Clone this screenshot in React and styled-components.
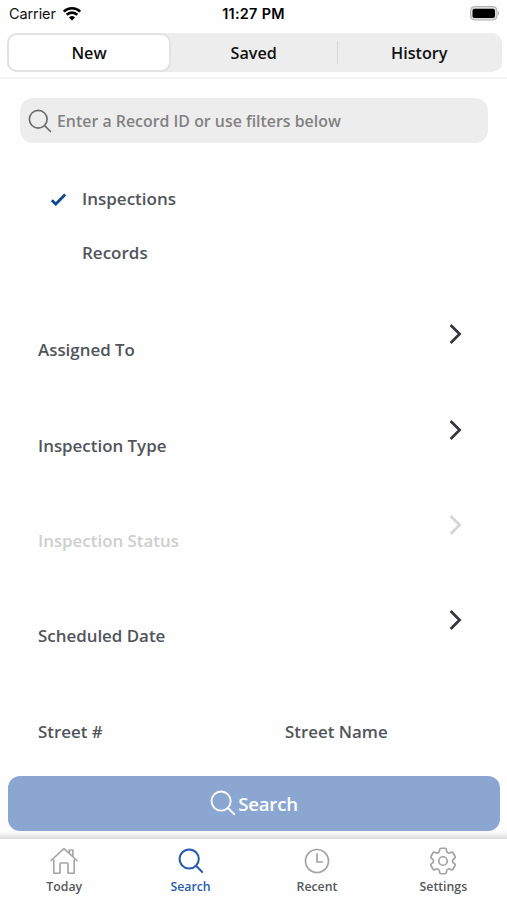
import styled, { createGlobalStyle, css } from 'styled-components';
import { useState } from 'react';
import { HiOutlineCog6Tooth } from 'react-icons/hi2';

const GlobalStyle = createGlobalStyle`
  * {
    box-sizing: border-box;
  }
  body {
    margin: 0;
    background: #fefefe;
    font-family: 'Open Sans', sans-serif;
  }
  button {
    font: inherit;
    color: inherit;
    border: 0;
    padding: 0;
    background: none;
  }
`

const Screen = styled.div`
  width: 507px;
  height: 900px;
  display: flex;
  flex-direction: column;
  overflow: hidden;
  background: #fefefe;
`

const StatusBar = styled.header`
  display: grid;
  grid-template-columns: 1fr auto 1fr;
  align-items: center;
  height: 28px;
  padding: 0 7px 2px 9px;
  font-family: Inter, sans-serif;
  font-size: 14.5px;
  color: #111;
  > svg {
    justify-self: end;
  }
`
const Carrier = styled.span`
  display: flex;
  align-items: center;
  gap: 6px;
  letter-spacing: -0.1px;
`
const Clock = styled.span`
  font-weight: 600;
  font-size: 14.4px;
  letter-spacing: 0.3px;
  margin-right: 2px;
  color: #000;
`

const Header = styled.div`
  height: 51px;
  padding: 5px 5px 0 7px;
  border-bottom: 2px solid #f5f5f5;
`
const Segments = styled.div`
  display: grid;
  grid-template-columns: 164px 1fr 1fr;
  height: 39px;
  border-radius: 10px;
  background: #ededed;
`
const Segment = styled.button`
  display: flex;
  align-items: center;
  justify-content: center;
  font-size: 16.2px;
  font-weight: 600;
  color: #111;
  ${props => props.$divided && css`
    background: linear-gradient(#d8d8d8, #d8d8d8) left center / 1px 23px no-repeat;
  `}
  ${props => props.$active && css`
    border: solid 2px #e2e2e2;
    border-radius: 10px;
    background: #fff;
  `}
`

const Content = styled.main`
  flex: 1;
  display: flex;
  flex-direction: column;
  padding-top: 19px;
`
const SearchField = styled.label`
  display: flex;
  align-items: center;
  gap: 5px;
  height: 45px;
  margin: 0 19px 0 20px;
  padding-left: 8px;
  border-radius: 13px;
  background: #ededed;
  color: #6c6c6c;
`
const SearchInput = styled.input`
  flex: 1;
  border: 0;
  padding: 0;
  outline: 0;
  background: none;
  font: 600 15.9px 'Open Sans', sans-serif;
  &::placeholder {
    color: #828282;
    opacity: 1;
  }
`

const RecordTypes = styled.div`
  display: flex;
  flex-direction: column;
  padding: 29px 12px 1px 50px;
`
const RecordType = styled.button`
  display: grid;
  grid-template-columns: 32px 1fr;
  align-items: center;
  height: 53.5px;
  font-size: 17px;
  font-weight: 600;
  text-align: left;
  color: #51555b;
`
const CheckSlot = styled.span`
  padding-top: 2px;
`

const Filters = styled.div`
  display: flex;
  flex-direction: column;
`
const FilterRow = styled.button`
  display: flex;
  justify-content: space-between;
  align-items: flex-end;
  height: 95.3px;
  padding: 0 45px 12px 38px;
  border-bottom: solid 1px #fcfcfc;
  font-size: 16.9px;
  font-weight: 600;
  line-height: 24px;
  color: ${props => props.$disabled ? '#cecece' : '#51555b'};
  > svg {
    margin-bottom: 17px;
    color: ${props => props.$disabled ? '#d5d5d5' : '#35373d'};
  }
`
const StreetRow = styled.div`
  display: grid;
  grid-template-columns: 247px 1fr;
  align-items: end;
  height: 95px;
  padding: 0 45px 12px 38px;
  font-size: 16.9px;
  font-weight: 600;
  line-height: 24px;
  color: #51555b;
`

const Footer = styled.div`
  height: 63px;
  flex: none;
  padding: 0 7px 0 8px;
  background: linear-gradient(#fefefe 54px, #f6f6f6 57px, #dcdcdc);
`
const SearchButton = styled.button`
  display: flex;
  align-items: center;
  justify-content: center;
  gap: 2px;
  width: 100%;
  height: 55px;
  padding-bottom: 1px;
  border-radius: 12px;
  background: #8ba6d0;
  color: #fff;
  font-size: 18.6px;
  font-weight: 600;
  letter-spacing: -0.2px;
`

const TabBar = styled.nav`
  flex: none;
  display: grid;
  grid-template-columns: repeat(4, 126.4px);
  height: 61px;
  padding-left: 1px;
  background: #fefefe;
`
const Tab = styled.button`
  display: flex;
  flex-direction: column;
  align-items: center;
  padding-top: 8px;
  gap: 3px;
  font-size: 12.3px;
  font-weight: 600;
  line-height: 18px;
  color: ${props => props.$active ? '#265cab' : '#55585c'};
  > svg {
    color: ${props => props.$active ? '#265cab' : '#a2a4a6'};
  }
`

const WifiIcon = () => (
  <svg width="20" height="15" viewBox="0 0 20 15" fill="none" stroke="#000" strokeWidth="2.6">
    <path d="M1.8 5.6a11.7 11.7 0 0 1 16.4 0" />
    <path d="M4.7 8.8a7.6 7.6 0 0 1 10.6 0" />
    <path d="M10 14.4 7 11.4a4.3 4.3 0 0 1 6 0z" fill="#000" stroke="none" />
  </svg>
)

const BatteryIcon = () => (
  <svg width="31" height="15" viewBox="0 0 31 15">
    <rect x="1.5" y=".5" width="26.5" height="13.5" rx="4" fill="#ddd" stroke="#b0b0b0" />
    <rect x="3.5" y="2.7" width="22.5" height="9.2" rx="2" fill="#000" />
    <path d="M29 4.8q2 2.5 0 5z" fill="#aaa" />
  </svg>
)

const SearchIcon = ({ size = 26, stroke = 1.8 }) => (
  <svg width={size} height={size} viewBox="0 0 26 26" fill="none" stroke="currentColor" strokeWidth={stroke} strokeLinecap="round">
    <circle cx="11.1" cy="11.1" r="9.6" />
    <path d="m18 18 6.4 6.4" />
  </svg>
)

const TabSearchIcon = () => (
  <svg width="28" height="28" viewBox="0 0 28 28" fill="none" stroke="currentColor" strokeWidth="2" strokeLinecap="round">
    <circle cx="12.2" cy="12" r="9.6" />
    <path d="m19 18.8 6.200 6.200" />
  </svg>
)

const CheckIcon = () => (
  <svg width="17" height="14" viewBox="0 0 17 14" fill="none" stroke="#0d4791" strokeWidth="2.8">
    <path d="m1.8 8.2 4 3.8 9.4-9.4" />
  </svg>
)

const ChevronIcon = () => (
  <svg width="14" height="22" viewBox="0 0 14 22" fill="none" stroke="currentColor" strokeWidth="2.7">
    <path d="m2.6 2 9 9-9 9" />
  </svg>
)

const HomeIcon = () => (
  <svg width="28" height="28" viewBox="0 0 28 28" fill="none" stroke="currentColor" strokeWidth="1.6" strokeLinejoin="round" strokeLinecap="round">
    <path d="M1 13.5 14 1.7l13 11.8M3.8 13v13.2H10V17q0-1 1-1h6q1 0 1 1v9.2h6.2V13M19.3 6V3h3.6v6.3" />
  </svg>
)

const RecentIcon = () => (
  <svg width="28" height="28" viewBox="0 0 28 28" fill="none" stroke="currentColor" strokeWidth="1.7">
    <circle cx="14" cy="14" r="11.5" />
    <path d="M14 6.3V15h6" />
  </svg>
)

const GearIcon = styled(HiOutlineCog6Tooth)`
  width: 34px;
  height: 34px;
  margin: -3px;
  > path {
    stroke-width: 1.2px;
  }
`

const filters = [
  { label: 'Assigned To' },
  { label: 'Inspection Type' },
  { label: 'Inspection Status', disabled: true },
  { label: 'Scheduled Date' },
]

const tabs = [
  { label: 'Today', icon: <HomeIcon /> },
  { label: 'Search', icon: <TabSearchIcon /> },
  { label: 'Recent', icon: <RecentIcon /> },
  { label: 'Settings', icon: <GearIcon /> },
]

export default function App() {
  const [segment, setSegment] = useState('New')
  const [type, setType] = useState('Inspections')
  const [tab, setTab] = useState('Search')

  return (
    <Screen>
      <GlobalStyle />
      <StatusBar>
        <Carrier>Carrier <WifiIcon /></Carrier>
        <Clock>11:27 PM</Clock>
        <BatteryIcon />
      </StatusBar>
      <Header>
        <Segments>
          {['New', 'Saved', 'History'].map(name => (
            <Segment
              key={name}
              $active={segment === name}
              $divided={name === 'History'}
              onClick={() => setSegment(name)}
            >
              {name}
            </Segment>
          ))}
        </Segments>
      </Header>
      <Content>
        <SearchField>
          <SearchIcon size={24} />
          <SearchInput placeholder="Enter a Record ID or use filters below" />
        </SearchField>
        <RecordTypes>
          {['Inspections', 'Records'].map(name => (
            <RecordType key={name} onClick={() => setType(name)}>
              <CheckSlot>{type === name && <CheckIcon />}</CheckSlot>
              {name}
            </RecordType>
          ))}
        </RecordTypes>
        <Filters>
          {filters.map(({ label, disabled }) => (
            <FilterRow key={label} $disabled={disabled} disabled={disabled}>
              {label}
              <ChevronIcon />
            </FilterRow>
          ))}
          <StreetRow>
            <span>Street #</span>
            <span>Street Name</span>
          </StreetRow>
        </Filters>
      </Content>
      <Footer>
        <SearchButton>
          <SearchIcon />
          Search
        </SearchButton>
      </Footer>
      <TabBar>
        {tabs.map(({ label, icon }) => (
          <Tab key={label} $active={tab === label} onClick={() => setTab(label)}>
            {icon}
            {label}
          </Tab>
        ))}
      </TabBar>
    </Screen>
  )
}
